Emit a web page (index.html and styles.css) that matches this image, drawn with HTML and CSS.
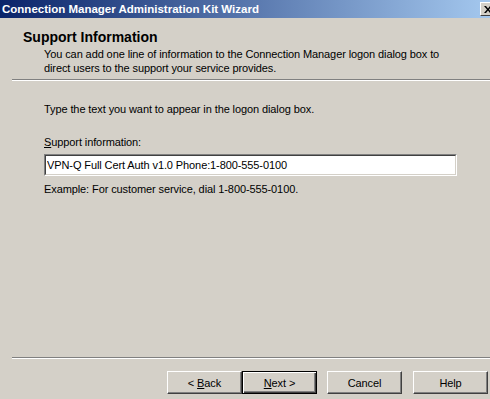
FILE: index.html
```html
<!DOCTYPE html>
<html lang="en">
<head>
  <meta charset="UTF-8">
  <title>Connection Manager Administration Kit Wizard</title>
  <link rel="stylesheet" href="styles.css">
</head>
<body>
  <div class="window">
    <div class="titlebar">
      <span class="caption">Connection Manager Administration Kit Wizard</span>
      <span class="close">
        <svg width="8" height="7" viewBox="0 0 8 7"><path d="M0 0h2l2 2.5L6 0h2L5 3.5 8 7H6L4 4.5 2 7H0l3-3.5z" fill="#000"/></svg>
      </span>
    </div>

    <div class="header">
      <h1>Support Information</h1>
      <p>You can add one line of information to the Connection Manager logon dialog box to<br>direct users to the support your service provides.</p>
    </div>
    <div class="rule"></div>

    <div class="content">
      <p class="intro">Type the text you want to appear in the logon dialog box.</p>
      <label class="label" for="support"><u>S</u>upport information:</label>
      <div class="field">
        <input id="support" type="text" value="VPN-Q Full Cert Auth v1.0 Phone:1-800-555-0100">
      </div>
      <p class="example">Example: For customer service, dial 1-800-555-0100.</p>
    </div>

    <div class="rule"></div>
    <div class="buttons">
      <button class="btn">&lt; <u>B</u>ack</button>
      <button class="btn default"><u>N</u>ext &gt;</button>
      <button class="btn gap">Cancel</button>
      <button class="btn gap">Help</button>
    </div>
  </div>
</body>
</html>
```

FILE: styles.css
```css
html, body {
  margin: 0;
  height: 100%;
  overflow: hidden;
  background: #d4d0c8;
}

body {
  font-family: "Liberation Sans", Arial, sans-serif;
  font-size: 11px;
  letter-spacing: -0.1px;
  color: #000;
}

.window {
  width: 496px;
  height: 399px;
  display: flex;
  flex-direction: column;
}

.titlebar {
  height: 18px;
  display: flex;
  align-items: center;
  padding-left: 2px;
  background: linear-gradient(to right, #0a246a, #a6caf0);
  color: #fff;
  font-weight: bold;
  font-size: 11.5px;
  letter-spacing: 0;
}

.close {
  margin-left: auto;
  width: 16px;
  height: 14px;
  box-sizing: border-box;
  display: flex;
  align-items: center;
  justify-content: center;
  background: #d4d0c8;
  border-top: 1px solid #fff;
  border-left: 1px solid #fff;
  border-bottom: 1px solid #404040;
  border-right: 1px solid #404040;
}

.header {
  height: 61px;
  padding: 11px 0 0 23px;
  box-sizing: border-box;
}

.header h1 {
  margin: 0;
  font-size: 14px;
  font-weight: bold;
  line-height: 16px;
  letter-spacing: 0;
}

.header p {
  margin: 2px 0 0 21px;
  line-height: 14px;
}

.rule {
  margin: 0 2px 0 12px;
  height: 0;
  border-top: 1px solid #808080;
  border-bottom: 1px solid #fff;
}

.content {
  flex: 1;
  padding: 21px 0 0 44px;
}

.content p {
  margin: 0;
  line-height: 14px;
}

.label {
  display: block;
  margin-top: 19px;
  line-height: 14px;
}

.field {
  width: 413px;
  height: 22px;
  margin-top: 5px;
  box-sizing: border-box;
  border-top: 1px solid #808080;
  border-left: 1px solid #808080;
  border-right: 1px solid #fff;
  border-bottom: 1px solid #fff;
}

.field input {
  display: block;
  width: 100%;
  height: 100%;
  box-sizing: border-box;
  margin: 0;
  padding: 0 1px;
  border-top: 1px solid #404040;
  border-left: 1px solid #404040;
  border-right: 1px solid #d4d0c8;
  border-bottom: 1px solid #d4d0c8;
  background: #fff;
  font: inherit;
  letter-spacing: -0.1px;
  outline: none;
}

.example {
  margin-top: 6px !important;
}

.buttons {
  display: flex;
  padding: 12px 0 5px 167px;
}

.btn {
  width: 75px;
  height: 23px;
  padding: 0;
  box-sizing: border-box;
  font: inherit;
  letter-spacing: -0.1px;
  color: #000;
  background: #d4d0c8;
  border-top: 1px solid #fff;
  border-left: 1px solid #fff;
  border-right: 1px solid #404040;
  border-bottom: 1px solid #404040;
  box-shadow: inset -1px -1px 0 #808080;
}

.btn.default {
  border: 1px solid #000;
  box-shadow: inset 1px 1px 0 #fff, inset -1px -1px 0 #404040, inset -2px -2px 0 #808080;
}

.btn.gap {
  margin-left: 10px;
}

.btn.gap + .btn.gap {
  margin-left: 11px;
}
```
